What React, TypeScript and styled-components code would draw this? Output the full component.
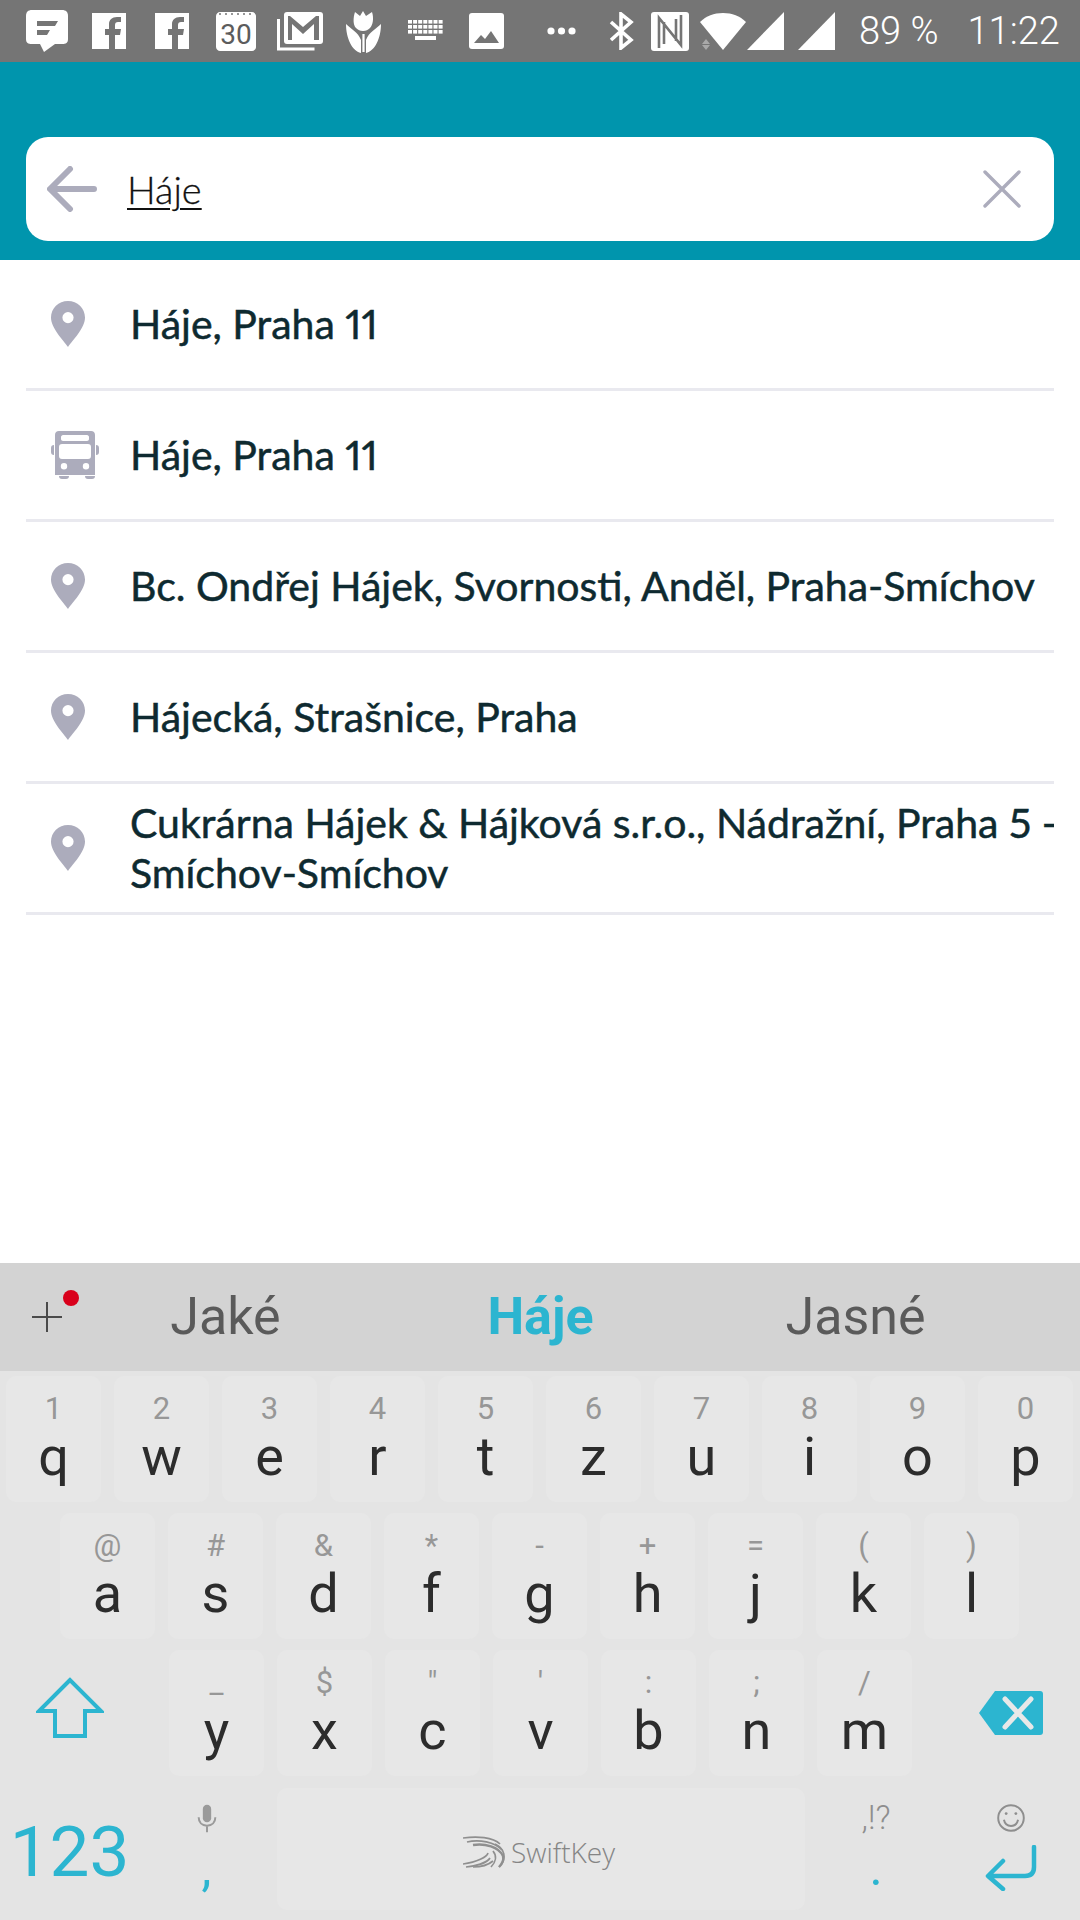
import React from "react";
import styled, { createGlobalStyle } from "styled-components";

const Global = createGlobalStyle`
  html, body { margin: 0; padding: 0; background: #fff; }
  body { width: 1080px; height: 1920px; overflow: hidden; font-family: "Roboto", sans-serif; }
`;

const Screen = styled.div`
  width: 1080px;
  height: 1920px;
  display: flex;
  flex-direction: column;
  overflow: hidden;
`;

const StatusBar = styled.div`
  height: 62px;
  background: #757575;
  display: flex;
  align-items: center;
  padding-left: 26px;
  color: #fff;
`;

const StatusIcon = styled.svg<{ $left?: number }>`
  flex: none;
  margin-left: ${(p) => p.$left ?? 0}px;
`;

const StatusText = styled.span<{ $left: number }>`
  margin-left: ${(p) => p.$left}px;
  font: 300 38px/62px "Roboto", sans-serif;
  white-space: nowrap;
`;

const Header = styled.div`
  height: 198px;
  background: #0095ad;
  padding: 75px 26px 0;
  box-sizing: border-box;
`;

const SearchBox = styled.div`
  height: 104px;
  background: #fff;
  border-radius: 22px;
  display: flex;
  align-items: center;
  padding: 0 33px 0 21px;
`;

const SearchText = styled.span`
  flex: 1;
  margin-left: 30px;
  font: 300 38px/44px "Lato", sans-serif;
  color: #111;
  -webkit-text-stroke: 0.3px #111;
  text-decoration: underline;
  text-decoration-thickness: 2px;
  text-underline-offset: 4px;
`;

const List = styled.div`
  flex: 1;
  background: #fff;
`;

const Row = styled.div`
  height: 128px;
  margin: 0 26px;
  border-bottom: 3px solid #e9e9ef;
  display: flex;
  align-items: center;
`;

const RowIcon = styled.div`
  width: 104px;
  flex: none;
  display: flex;
  padding-left: 25px;
  box-sizing: border-box;
`;

const RowText = styled.div`
  flex: 1;
  min-width: 0;
  overflow: hidden;
  font: 400 41px/50px "Lato", sans-serif;
  font-variant-numeric: proportional-nums;
  letter-spacing: 0;
  color: #0e2a30;
  -webkit-text-stroke: 0.5px #0e2a30;
`;

const RowLine = styled.div`
  white-space: nowrap;
`;

const Suggestions = styled.div`
  height: 108px;
  background: #d3d3d3;
  display: flex;
  align-items: center;
  position: relative;
`;

const PlusSlot = styled.div`
  width: 68px;
  flex: none;
  display: flex;
  justify-content: center;
  padding-left: 25px;
  box-sizing: border-box;
`;

const RedDot = styled.span`
  position: absolute;
  left: 63px;
  top: 27px;
  width: 16px;
  height: 16px;
  border-radius: 50%;
  background: #d9001b;
`;

const Suggestion = styled.div<{ $active?: boolean }>`
  width: 315px;
  flex: none;
  text-align: center;
  font: ${(p) => (p.$active ? 700 : 400)} 52px/110px "Roboto", sans-serif;
  color: ${(p) => (p.$active ? "#2cb5d0" : "#5a5a5a")};
`;

const Keyboard = styled.div`
  height: 549px;
  background: #e4e4e4;
  padding-top: 5px;
  box-sizing: border-box;
`;

const KeyRow = styled.div<{ $pad: number; $top?: number; $h?: number }>`
  display: flex;
  gap: 13px;
  padding-left: ${(p) => p.$pad}px;
  margin-top: ${(p) => p.$top ?? 0}px;
  height: ${(p) => p.$h ?? 126}px;
`;

const KeyCap = styled.div`
  width: 95px;
  flex: none;
  background: #e7e7e7;
  border-radius: 10px;
  display: flex;
  flex-direction: column;
  align-items: center;
`;

const Hint = styled.span`
  height: 44px;
  margin-top: 10px;
  font: 400 31px/46px "Roboto", sans-serif;
  color: #979797;
`;

const Letter = styled.span`
  font: 400 54px/54px "Roboto", sans-serif;
  color: #2c2c2c;
`;

const SideSlot = styled.div<{ $w: number }>`
  width: ${(p) => p.$w}px;
  flex: none;
  display: flex;
  flex-direction: column;
  align-items: center;
  justify-content: center;
  box-sizing: border-box;
`;

const ShiftSlot = styled(SideSlot)`
  padding: 0 16px 10px 0;
`;

const BackspaceSlot = styled(SideSlot)`
  padding-left: 16px;
`;

const StackSlot = styled(SideSlot)<{ $pt: number }>`
  justify-content: flex-start;
  padding-top: ${(p) => p.$pt}px;
`;

const SpaceBar = styled.div`
  width: 528px;
  flex: none;
  background: #e7e7e7;
  border-radius: 10px;
  display: flex;
  align-items: center;
  justify-content: center;
  gap: 4px;
  padding: 6px 4px 0 0;
  box-sizing: border-box;
`;

const Brand = styled.span`
  font: 300 28px/40px "Open Sans", sans-serif;
  color: #858585;
`;

const NumKey = styled.span`
  font: 400 71px/80px "Roboto", sans-serif;
  color: #2cb5d0;
  margin: 5px 0 0 3px;
`;

const Accent = styled.span<{ $top: number }>`
  margin-top: ${(p) => p.$top}px;
  font: 400 50px/44px "Roboto", sans-serif;
  color: #2cb5d0;
`;

const Punct = styled.span`
  font: 300 33px/40px "Roboto", sans-serif;
  color: #8e8e8e;
`;

const EnterGlyph = styled.svg`
  margin-top: 12px;
`;

const row1: [string, string][] = [
  ["1", "q"], ["2", "w"], ["3", "e"], ["4", "r"], ["5", "t"],
  ["6", "z"], ["7", "u"], ["8", "i"], ["9", "o"], ["0", "p"],
];
const row2: [string, string][] = [
  ["@", "a"], ["#", "s"], ["&", "d"], ["*", "f"], ["-", "g"],
  ["+", "h"], ["=", "j"], ["(", "k"], [")", "l"],
];
const row3: [string, string][] = [
  ["_", "y"], ["$", "x"], ['"', "c"], ["'", "v"], [":", "b"], [";", "n"], ["/", "m"],
];

const results = [
  { icon: "pin", lines: ["Háje, Praha 11"] },
  { icon: "bus", lines: ["Háje, Praha 11"] },
  { icon: "pin", lines: ["Bc. Ondřej Hájek, Svornosti, Anděl, Praha-Smíchov"] },
  { icon: "pin", lines: ["Hájecká, Strašnice, Praha"] },
  { icon: "pin", lines: ["Cukrárna Hájek & Hájková s.r.o., Nádražní, Praha 5 -", "Smíchov-Smíchov"] },
];

const GREY = "#acacbc";
const BAR = "#757575";
const TEAL = "#2cb5d0";

function PinIcon() {
  return (
    <svg width="34" height="46" viewBox="0 0 34 46">
      <path
        fillRule="evenodd"
        fill={GREY}
        d="M17 0C7.6 0 0 7.4 0 16.6 0 27 12 39 17 46c5-7 17-19 17-29.4C34 7.4 26.4 0 17 0zm0 11a5.6 5.6 0 1 1 0 11.2A5.6 5.6 0 0 1 17 11z"
      />
    </svg>
  );
}

function BusIcon() {
  return (
    <svg width="48" height="48" viewBox="0 0 48 48">
      <path
        fillRule="evenodd"
        fill={GREY}
        d="M8 0h32c2.500 0 4 1.500 4 4v40H4V4c0-2.500 1.500-4 4-4zm4 4c-1 0-2 1-2 2v2c0 1 1 2 2 2h24c1 0 2-1 2-2V6c0-1-1-2-2-2H12zm-1 9c-2 0-3 1-3 3v9c0 2 1 3 3 3h26c2 0 3-1 3-3v-9c0-2-1-3-3-3H11zm2 19a3.200 3.200 0 1 0 0 6.400 3.200 3.200 0 0 0 0-6.400zm22 0a3.200 3.200 0 1 0 0 6.400 3.200 3.200 0 0 0 0-6.400z"
      />
      <path
        fill={GREY}
        d="M0 17c0-2 1-3 3-3v10c-2 0-3-1-3-3zM48 17c0-2-1-3-3-3v10c2 0 3-1 3-3zM8 45h10c0 2-1 3-3 3h-4c-2 0-3-1-3-3zM34 45h10c0 2-1 3-3 3h-4c-2 0-3-1-3-3z"
      />
    </svg>
  );
}

function FacebookIcon({ left }: { left: number }) {
  return (
    <StatusIcon $left={left} width="34" height="36" viewBox="0 0 34 36">
      <rect width="34" height="36" fill="#fff" />
      <path fill={BAR} d="M23 36V22h5l1-6h-6v-4c0-2 1-3 3-3h3V4c-1 0-3 0-4 0-5 0-8 3-8 7v5h-4v6h4v14z" />
    </StatusIcon>
  );
}

function KeyboardGlyph({ left }: { left: number }) {
  const cells = [];
  for (let r = 0; r < 3; r++) {
    for (let c = 0; c < 7; c++) {
      cells.push(<rect key={`${r}-${c}`} x={c * 5.1} y={r * 5} width="4" height="3.6" fill="#fff" />);
    }
  }
  return (
    <StatusIcon $left={left} width="36" height="22" viewBox="0 0 36 22">
      {cells}
      <rect x="7" y="16" width="21" height="4" fill="#fff" />
    </StatusIcon>
  );
}

function Swoosh() {
  return (
    <svg width="44" height="32" viewBox="0 0 44 32" fill="none" stroke="#8f8f8f" strokeWidth="1.7">
      <path d="M0 2C14 0 30 1 37 8" />
      <path d="M4 6C16 3 32 6 39 14" />
      <path strokeWidth="2.4" d="M10 9c12-2 26 2 30 11 1 4-1 8-4 11" />
      <path d="M32 8c9 4 13 14 4 23" />
      <path d="M30 15c4 5 3 11-2 16" />
      <path d="M25 17c-1 4-11 9-25 11" />
      <path d="M27 22c-3 5-15 8-24 9" />
      <path d="M30 25c-6 5-14 6-20 6" />
    </svg>
  );
}

export default function App() {
  return (
    <Screen>
      <Global />
      <StatusBar>
        {/* chat */}
        <StatusIcon width="42" height="42" viewBox="0 0 42 42">
          <path fill="#fff" d="M6 0h30c4 0 6 2 6 6v23c0 4-2 5-6 5h-7l-11 8-4-8H6c-4 0-6-1-6-5V6c0-4 2-6 6-6z" />
          <path fill={BAR} d="M11 11h21l-3 5H11zM11 20h13l-3 5H11z" />
        </StatusIcon>
        <FacebookIcon left={24} />
        <FacebookIcon left={29} />
        {/* calendar */}
        <StatusIcon $left={27} width="40" height="40" viewBox="0 0 40 40">
          <path fill="#fff" d="M4 1h32c2 0 4 2 4 4v31c0 2-2 4-4 4H4c-2 0-4-2-4-4V5c0-2 2-4 4-4z" />
          <path stroke={BAR} strokeWidth="1.5" strokeDasharray="2 4" d="M3 3h34" />
          <text x="20" y="33" textAnchor="middle" fontFamily="Roboto, sans-serif" fontWeight="400" fontSize="28" fill="#5c5c5c">30</text>
        </StatusIcon>
        {/* gmail stack */}
        <StatusIcon $left={21} width="46" height="40" viewBox="0 0 46 40">
          <path fill="none" stroke="#fff" strokeWidth="3" d="M1.5 8v30h36" />
          <rect x="7" y="1" width="39" height="32" rx="3" fill="#fff" />
          <path fill={BAR} d="M11 5h2l13 11L39 5h3v24h-5V13L26 23 15 13v16h-4z" />
        </StatusIcon>
        {/* tulip */}
        <StatusIcon $left={23} width="35" height="43" viewBox="0 0 35 43">
          <path fill="#fff" d="M9 2l5 4 3-5 3 5 6-4c2 6 1 13-2 16-2 2-4 3-7 3s-5-1-7-3C7 15 7 8 9 2z" />
          <path fill="#fff" d="M16.400 24h2.200v18h-2.200zM0 14c5 5 12 8 15 16v13C6 41 0 28 0 14zM35 14c-5 5-12 8-15 16v13c9-2 15-15 15-29z" />
        </StatusIcon>
        <KeyboardGlyph left={27} />
        {/* image */}
        <StatusIcon $left={25} width="35" height="36" viewBox="0 0 35 36">
          <rect width="35" height="36" rx="3" fill="#fff" />
          <path fill={BAR} d="M5 30l7-8 4 4 6-8 8 12z" />
        </StatusIcon>
        {/* overflow dots */}
        <StatusIcon $left={43} width="29" height="8" viewBox="0 0 29 8">
          <circle cx="4" cy="4" r="3.6" fill="#fff" />
          <circle cx="14.5" cy="4" r="3.6" fill="#fff" />
          <circle cx="25" cy="4" r="3.6" fill="#fff" />
        </StatusIcon>
        {/* bluetooth */}
        <StatusIcon $left={33} width="26" height="38" viewBox="0 0 26 38">
          <path fill="none" stroke="#fff" strokeWidth="3.6" d="M2 10l20 18-10 8V2l10 8L2 28" />
        </StatusIcon>
        {/* nfc */}
        <StatusIcon $left={16} width="38" height="39" viewBox="0 0 38 39">
          <rect width="38" height="39" rx="3" fill="#fff" />
          <path fill="none" stroke={BAR} strokeWidth="2.6" d="M8 36V6l22 27V3M13 10v22M25 7v22" />
        </StatusIcon>
        {/* wifi */}
        <StatusIcon $left={11} width="46" height="38" viewBox="0 0 46 38">
          <path fill="#fff" d="M0 10C6 4 14 1 23 1s17 3 23 9L23 38 0 10z" />
          <path fill="#a9a9a9" d="M6 27l-4 5h8zM6 38l-4-5h8z" />
        </StatusIcon>
        {/* signal */}
        <StatusIcon $left={1} width="37" height="38" viewBox="0 0 37 38">
          <path fill="#fff" d="M37 0v38H0z" />
        </StatusIcon>
        <StatusIcon $left={14} width="37" height="38" viewBox="0 0 37 38">
          <path fill="#fff" d="M37 0v38H0z" />
        </StatusIcon>
        <StatusText $left={24}>89 %</StatusText>
        <StatusText $left={29}>11:22</StatusText>
      </StatusBar>

      <Header>
        <SearchBox>
          <svg width="50" height="46" viewBox="0 0 50 46" fill="none" stroke={GREY} strokeWidth="6" strokeLinecap="round" strokeLinejoin="round">
            <path d="M47 23H4M23 3L3 23l20 20" />
          </svg>
          <SearchText>Háje</SearchText>
          <svg width="38" height="38" viewBox="0 0 38 38" fill="none" stroke={GREY} strokeWidth="3.4" strokeLinecap="round">
            <path d="M2 2l34 34M36 2L2 36" />
          </svg>
        </SearchBox>
      </Header>

      <List>
        {results.map((r, i) => (
          <Row key={i}>
            <RowIcon>{r.icon === "pin" ? <PinIcon /> : <BusIcon />}</RowIcon>
            <RowText>
              {r.lines.map((line) => (
                <RowLine key={line}>{line}</RowLine>
              ))}
            </RowText>
          </Row>
        ))}
      </List>

      <Suggestions>
        <PlusSlot>
          <svg width="30" height="30" viewBox="0 0 30 30" stroke="#4a4a4a" strokeWidth="2">
            <path d="M0 15h30M15 0v30" />
          </svg>
        </PlusSlot>
        <RedDot />
        <Suggestion>Jaké</Suggestion>
        <Suggestion $active>Háje</Suggestion>
        <Suggestion>Jasné</Suggestion>
      </Suggestions>

      <Keyboard>
        <KeyRow $pad={6}>
          {row1.map(([h, l]) => (
            <KeyCap key={l}>
              <Hint>{h}</Hint>
              <Letter>{l}</Letter>
            </KeyCap>
          ))}
        </KeyRow>
        <KeyRow $pad={60} $top={11}>
          {row2.map(([h, l]) => (
            <KeyCap key={l}>
              <Hint>{h}</Hint>
              <Letter>{l}</Letter>
            </KeyCap>
          ))}
        </KeyRow>
        <KeyRow $pad={0} $top={11}>
          <ShiftSlot $w={156}>
            <svg width="68" height="62" viewBox="0 0 68 62" fill="none" stroke={TEAL} strokeWidth="4">
              <path d="M34 3L3 34h16v25h30V34h16z" />
            </svg>
          </ShiftSlot>
          {row3.map(([h, l]) => (
            <KeyCap key={l}>
              <Hint>{h}</Hint>
              <Letter>{l}</Letter>
            </KeyCap>
          ))}
          <BackspaceSlot $w={155}>
            <svg width="64" height="44" viewBox="0 0 64 44">
              <path fill={TEAL} d="M16 0h45c2 0 3 1 3 3v38c0 2-1 3-3 3H16L0 22z" />
              <path stroke="#e8e8e8" strokeWidth="5" strokeLinecap="round" d="M26 8l26 28M52 8L26 36" />
            </svg>
          </BackspaceSlot>
        </KeyRow>
        <KeyRow $pad={0} $top={12} $h={122}>
          <SideSlot $w={136}>
            <NumKey>123</NumKey>
          </SideSlot>
          <StackSlot $w={115} $pt={16}>
            <svg width="20" height="30" viewBox="0 0 24 34">
              <rect x="7" y="0" width="10" height="21" rx="5" fill="#9a9a9a" />
              <path fill="none" stroke="#9a9a9a" strokeWidth="2.4" d="M2 15c0 6 4 10 10 10s10-4 10-10M12 25v8" />
            </svg>
            <Accent $top={12}>,</Accent>
          </StackSlot>
          <SpaceBar>
            <Swoosh />
            <Brand>SwiftKey</Brand>
          </SpaceBar>
          <StackSlot $w={116} $pt={10}>
            <Punct>,!?</Punct>
            <Accent $top={8}>.</Accent>
          </StackSlot>
          <StackSlot $w={128} $pt={15}>
            <svg width="30" height="30" viewBox="0 0 34 34" fill="none" stroke="#8e8e8e" strokeWidth="2.2">
              <circle cx="17" cy="17" r="14.5" />
              <path d="M9 19c1 5 4 7 8 7s7-2 8-7" />
              <circle cx="11.5" cy="12" r="1.6" fill="#8e8e8e" stroke="none" />
              <circle cx="22.5" cy="12" r="1.6" fill="#8e8e8e" stroke="none" />
            </svg>
            <EnterGlyph width="52" height="46" viewBox="0 0 52 46" fill="none" stroke={TEAL} strokeWidth="4.5" strokeLinecap="round" strokeLinejoin="round">
              <path d="M49 2v20c0 6-3 9-9 9H4M18 16L3 31l15 13" />
            </EnterGlyph>
          </StackSlot>
        </KeyRow>
      </Keyboard>
    </Screen>
  );
}
